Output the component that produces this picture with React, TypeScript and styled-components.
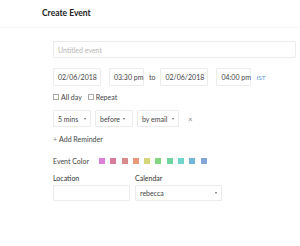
import React from 'react';
import styled, { createGlobalStyle } from 'styled-components';

const Global = createGlobalStyle`
  html, body { margin: 0; padding: 0; background: #fff; }
  body { font-family: Lato, "Open Sans", sans-serif; color: #333; }
`;

const Page = styled.div`
  width: 300px;
  height: 246px;
  overflow: hidden;
`;

const Header = styled.div`
  padding: 8px 0 0 42px;
  height: 19px;
  border-bottom: 1px solid #f5f5f5;
  font-size: 8.5px;
  font-weight: 700;
  color: #222;
`;

const Form = styled.div`
  padding: 13px 4px 0 53px;
  display: flex;
  flex-direction: column;
`;

const Box = styled.div<{ $w?: number; $h?: number }>`
  box-sizing: border-box;
  width: ${(p) => (p.$w ? `${p.$w}px` : '100%')};
  height: ${(p) => p.$h ?? 18}px;
  flex-shrink: 0;
  border: 1px solid #ececec;
  border-radius: 1px;
  display: flex;
  align-items: center;
  justify-content: space-between;
  padding: 0 4px;
  font-size: 7px;
  white-space: nowrap;
  color: #444;
`;

const Placeholder = styled.span`
  color: #b5b5b5;
`;

const Row = styled.div<{ $mt: number; $gap?: number; $h?: number }>`
  display: flex;
  align-items: center;
  gap: ${(p) => p.$gap ?? 8}px;
  margin-top: ${(p) => p.$mt}px;
  height: ${(p) => (p.$h ? `${p.$h}px` : 'auto')};
  font-size: 7px;
  white-space: nowrap;
  color: #444;
`;

const Small = styled.span`
  font-size: 7px;
  color: #444;
`;

const Tz = styled.span`
  font-size: 6.5px;
  color: #5b9bd5;
`;

const Check = styled.label`
  display: flex;
  align-items: center;
  gap: 2px;
  font-size: 7px;
  color: #444;
`;

const CheckBox = styled.span`
  box-sizing: border-box;
  width: 6px;
  height: 6px;
  border: 1px solid #aaa;
`;

const Caret = styled.span`
  width: 0;
  height: 0;
  border-left: 1.5px solid transparent;
  border-right: 1.5px solid transparent;
  border-top: 2px solid #666;
  margin-left: 3px;
`;

const Close = styled.span`
  font-size: 8px;
  color: #888;
  margin-left: 5px;
`;

const ColorLabel = styled.span`
  width: 46px;
`;

const Swatches = styled.div`
  display: flex;
  gap: 5.3px;
`;

const Swatch = styled.span<{ $c: string }>`
  width: 6px;
  height: 6px;
  background: ${(p) => p.$c};
`;

const Fields = styled.div`
  display: flex;
  gap: 5px;
  margin-top: 9px;
`;

const Field = styled.div`
  display: flex;
  flex-direction: column;
  gap: 3px;
`;

const Label = styled.span`
  font-size: 7px;
  line-height: 8px;
  color: #333;
`;

const colors = ['#dc7fd6', '#d97c9c', '#d98a8b', '#ea987c', '#d6d67a', '#83d580', '#6fd5a0', '#70d6ca', '#72b6d7', '#82a6d8'];

export default function App() {
  return (
    <Page>
      <Global />
      <Header>Create Event</Header>
      <Form>
        <Box $h={17}>
          <Placeholder>Untitled event</Placeholder>
        </Box>
        <Row $mt={10}>
          <Box $w={48}>02/06/2018</Box>
          <Box $w={35}>03:30 pm</Box>
          <Small style={{ marginLeft: -3, marginRight: -3 }}>to</Small>
          <Box $w={48}>02/06/2018</Box>
          <Box $w={35}>04:00 pm</Box>
          <Tz style={{ marginLeft: -3 }}>IST</Tz>
        </Row>
        <Row $mt={7} $gap={6} $h={8}>
          <Check><CheckBox />All day</Check>
          <Check><CheckBox />Repeat</Check>
        </Row>
        <Row $mt={9} $gap={4}>
          <Box $w={38} $h={17}>5 mins<Caret /></Box>
          <Box $w={38} $h={17} style={{ justifyContent: 'flex-start' }}>before<Caret /></Box>
          <Box $w={42} $h={17}>by email<Caret /></Box>
          <Close>×</Close>
        </Row>
        <Row $mt={8} $gap={2} $h={8}>
          <span style={{ color: '#888' }}>+</span>Add Reminder
        </Row>
        <Row $mt={14} $gap={0} $h={8}>
          <ColorLabel>Event Color</ColorLabel>
          <Swatches>
            {colors.map((c) => (
              <Swatch key={c} $c={c} />
            ))}
          </Swatches>
        </Row>
        <Fields>
          <Field>
            <Label>Location</Label>
            <Box $w={77} $h={16} />
          </Field>
          <Field>
            <Label>Calendar</Label>
            <Box $w={87} $h={16}>rebecca<Caret /></Box>
          </Field>
        </Fields>
      </Form>
    </Page>
  );
}
